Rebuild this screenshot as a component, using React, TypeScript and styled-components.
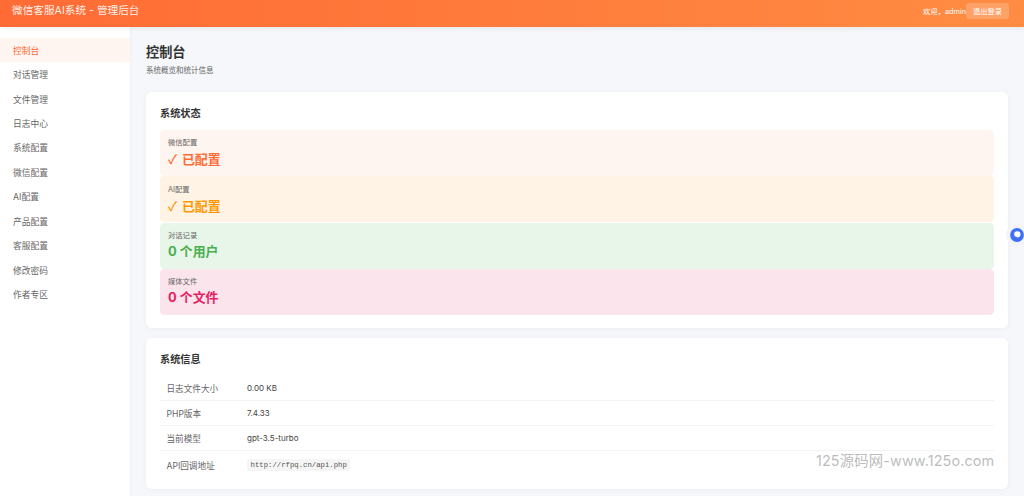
import React from "react";
import styled, { createGlobalStyle } from "styled-components";

const Global = createGlobalStyle`
  html, body { margin: 0; padding: 0; height: 496px; overflow: hidden; background: #f5f7fa; }
  body { font-family: Inter, "Noto Sans CJK SC", "Noto Sans", sans-serif; color: #333; }
  * { box-sizing: border-box; }
`;
const Page = styled.div`position: relative; width: 1024px; height: 496px; overflow: hidden; display: flex; flex-direction: column;`;
const Header = styled.header`
  height: 27px; flex: none; display: flex; align-items: center; justify-content: space-between;
  padding: 0 15px 0 12px; color: #fff; position: relative; z-index: 2;
  background: linear-gradient(90deg, #ff6b35, #ff8c42);
  box-shadow: 0 1px 6px rgba(0,0,0,.08);
`;
const Brand = styled.h1`margin: 0; font-size: 10.65px; font-weight: 400; line-height: 1; position: relative; top: -2.5px; color: rgba(255,255,255,.92);`;
const UserBox = styled.div`display: flex; align-items: center; font-size: 7.3px; position: relative; top: -3px;`;
const Logout = styled.button`
  border: 0; height: 16px; width: 43px; padding: 0; border-radius: 3px; color: #fff;
  background: rgba(255,255,255,.2); font: inherit; font-size: 7.3px;
`;
const Body = styled.div`flex: 1; display: flex; min-height: 0;`;
const Sidebar = styled.nav`
  width: 130px; flex: none; background: #fff; padding-top: 11px; display: flex; flex-direction: column;
  box-shadow: 1px 0 4px rgba(0,0,0,.03);
`;
const MenuItem = styled.a<{ $active?: boolean }>`
  height: 24.45px; display: flex; align-items: center; padding-left: 13px; font-size: 8.75px;
  color: ${(p) => (p.$active ? "#ff6b35" : "#666")};
  background: ${(p) => (p.$active ? "#fff5f0" : "transparent")};
`;
const Main = styled.main`flex: 1; min-width: 0; padding: 15px 16px 0;`;
const Title = styled.h2`margin: 0; font-size: 13.2px; font-weight: 700; line-height: 20px; color: #333;`;
const Subtitle = styled.p`margin: 3px 0 0; font-size: 7.5px; line-height: 11px; color: #666;`;
const Card = styled.section`
  background: #fff; border-radius: 6px; padding: 14px; margin-top: 10px;
  box-shadow: 0 1px 6px rgba(0,0,0,.04);
`;
const StatusCard = styled(Card)`margin-top: 16px; height: 236px;`;
const InfoCard = styled(Card)`height: 151px;`;
const CardTitle = styled.h3`margin: 0 0 10px; font-size: 10.2px; font-weight: 700; line-height: 14px; color: #333;`;
const StatusList = styled.div`display: flex; flex-direction: column; gap: .6px;`;
const Stat = styled.div<{ $bg: string; $fg: string }>`
  height: 45.8px; padding: 7.2px 8px; border-radius: 4.5px; background: ${(p) => p.$bg};
  strong { display: block; color: ${(p) => p.$fg}; font-size: 12.9px; line-height: 18px; margin-top: 2px; font-weight: 700; }
`;
const Check = styled.span`font-family: "Noto Sans CJK SC", sans-serif; font-weight: 500; margin-right: 2px;`;
const StatLabel = styled.div`font-size: 7.3px; line-height: 11px; color: #666;`;
const Row = styled.div<{ $last?: boolean }>`
  display: grid; grid-template-columns: 80.5px 1fr; align-items: center; height: ${(p) => (p.$last ? "28px" : "25px")}; padding: 0 6.5px;
  border-bottom: ${(p) => (p.$last ? "none" : "1px solid #f3f3f3")};
`;
const RowLabel = styled.span`color: #666; font-size: 8.6px;`;
const RowValue = styled.span`color: #444; font-size: 8px;`;
const Code = styled.code`
  display: inline-block; background: #f5f5f5; border-radius: 2px; padding: 2px 3.5px; line-height: 8px;
  font-family: "Liberation Mono", monospace; font-size: 7.3px; color: #555;
`;
const Floating = styled.div`
  position: absolute; left: 1006px; top: 224px; width: 22px; height: 22px; border-radius: 50%;
  background: #f2f4fa; display: flex; align-items: center; justify-content: center;
`;
const Watermark = styled.div`
  position: absolute; left: 816px; top: 451px; font-size: 14.4px; line-height: 20px; letter-spacing: .12px;
  color: rgba(120,120,120,.5); white-space: nowrap;
`;

const menu = ["控制台","对话管理","文件管理","日志中心","系统配置","微信配置","AI配置","产品配置","客服配置","修改密码","作者专区"];
const stats = [
  { label: "微信配置", check: true, value: "已配置", bg: "#fff5f0", fg: "#ff6b35" },
  { label: "AI配置", check: true, value: "已配置", bg: "#fff3e6", fg: "#ff9800" },
  { label: "对话记录", check: false, value: "0 个用户", bg: "#e8f5e9", fg: "#4caf50" },
  { label: "媒体文件", check: false, value: "0 个文件", bg: "#fce4ec", fg: "#e91e63" },
];

export default function App() {
  return (
    <Page>
      <Global />
      <Header>
        <Brand>微信客服AI系统 - 管理后台</Brand>
        <UserBox>欢迎，admin<Logout>退出登录</Logout></UserBox>
      </Header>
      <Body>
        <Sidebar>
          {menu.map((m, i) => <MenuItem key={m} $active={i === 0}>{m}</MenuItem>)}
        </Sidebar>
        <Main>
          <Title>控制台</Title>
          <Subtitle>系统概览和统计信息</Subtitle>
          <StatusCard>
            <CardTitle>系统状态</CardTitle>
            <StatusList>
              {stats.map((s) => (
                <Stat key={s.label} $bg={s.bg} $fg={s.fg}>
                  <StatLabel>{s.label}</StatLabel>
                  <strong>{s.check && <Check>✓ </Check>}{s.value}</strong>
                </Stat>
              ))}
            </StatusList>
          </StatusCard>
          <InfoCard>
            <CardTitle>系统信息</CardTitle>
            <Row><RowLabel>日志文件大小</RowLabel><RowValue>0.00 KB</RowValue></Row>
            <Row><RowLabel>PHP版本</RowLabel><RowValue>7.4.33</RowValue></Row>
            <Row><RowLabel>当前模型</RowLabel><RowValue>gpt-3.5-turbo</RowValue></Row>
            <Row $last><RowLabel>API回调地址</RowLabel><RowValue><Code>http://rfpq.cn/api.php</Code></RowValue></Row>
          </InfoCard>
        </Main>
      </Body>
      <Floating>
        <svg width="14" height="14" viewBox="0 0 14 14" aria-hidden="true">
          <circle cx="7" cy="7" r="6.9" fill="#3f6ff5" />
          <path d="M7.3 3.2a3.2 3.2 0 0 1 3.2 3.2c0 1.6-1.2 2.9-2.8 3.2L6.6 8.9A2.8 2.8 0 0 1 4.1 6.4 3.2 3.2 0 0 1 7.3 3.2z" fill="#fff" />
        </svg>
      </Floating>
      <Watermark>125源码网-www.125o.com</Watermark>
    </Page>
  );
}
